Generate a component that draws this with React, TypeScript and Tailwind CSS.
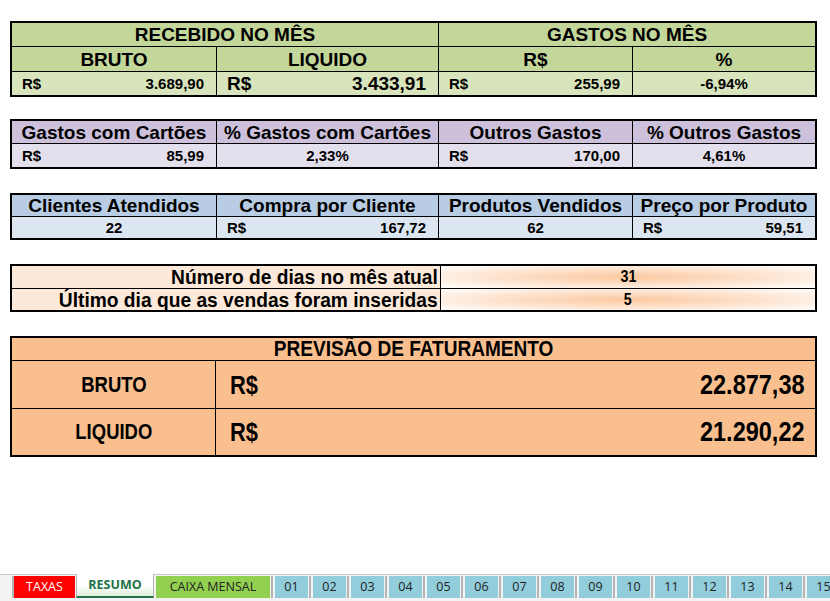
import type { ReactNode } from 'react'

// Spreadsheet "RESUMO" sheet: summary blocks + sheet tabs along the bottom.
// Grid lines come from a black table background showing through 1px gaps.
const TABLE = 'flex w-[807px] flex-col gap-px bg-black p-[2px] font-bold text-black leading-none'
const W = ['w-[204px]', 'w-[221px]', 'w-[193px]', 'w-[182px]']

function Row({ h, children }: { h: string; children: ReactNode }) {
  return <div className={`flex gap-px ${h}`}>{children}</div>
}

function Money({ value, big }: { value: string; big?: boolean }) {
  return (
    <div className={`flex h-full items-center justify-between pl-[10px] pr-[12px] ${big ? 'text-[19px]' : 'text-[15px]'}`}>
      <span>R$</span>
      <span>{value}</span>
    </div>
  )
}

function Center({ children }: { children: ReactNode }) {
  return <div className="flex h-full items-center justify-center text-[15px]">{children}</div>
}

// Arial Narrow look-alike: Liberation Sans squeezed horizontally
function Narrow({
  children,
  origin = 'origin-center',
  scale = 'scale-x-[0.84]',
}: {
  children: ReactNode
  origin?: string
  scale?: string
}) {
  return <span className={`inline-block whitespace-nowrap leading-[20px] ${scale} ${origin}`}>{children}</span>
}

function Recebido() {
  const head = 'flex shrink-0 items-center justify-center bg-[#c4d79b] text-[19px]'
  const val = 'shrink-0 bg-[#d8e4bc]'
  return (
    <div className={TABLE}>
      <Row h="h-[23px]">
        <div className={`w-[426px] ${head}`}>RECEBIDO NO MÊS</div>
        <div className={`w-[376px] ${head}`}>GASTOS NO MÊS</div>
      </Row>
      <Row h="h-[24px]">
        <div className={`${W[0]} ${head}`}>BRUTO</div>
        <div className={`${W[1]} ${head}`}>LIQUIDO</div>
        <div className={`${W[2]} ${head}`}>R$</div>
        <div className={`${W[3]} ${head}`}>%</div>
      </Row>
      <Row h="h-[23px]">
        <div className={`${W[0]} ${val}`}><Money value="3.689,90" /></div>
        <div className={`${W[1]} ${val}`}><Money value="3.433,91" big /></div>
        <div className={`${W[2]} ${val}`}><Money value="255,99" /></div>
        <div className={`${W[3]} ${val}`}><Center>-6,94%</Center></div>
      </Row>
    </div>
  )
}

function Block({
  headBg,
  valBg,
  heads,
  vals,
  headH,
  valH,
}: {
  headBg: string
  valBg: string
  heads: string[]
  vals: ReactNode[]
  headH: string
  valH: string
}) {
  return (
    <div className={TABLE}>
      <Row h={headH}>
        {heads.map((h, i) => (
          <div key={h} className={`${W[i]} ${headBg} flex shrink-0 items-center justify-center whitespace-nowrap text-[19px]`}>
            {h}
          </div>
        ))}
      </Row>
      <Row h={valH}>
        {vals.map((v, i) => (
          <div key={i} className={`${W[i]} ${valBg} shrink-0`}>
            {v}
          </div>
        ))}
      </Row>
    </div>
  )
}

function Dias() {
  const label = 'flex w-[428px] shrink-0 items-center justify-end bg-[#fde9d9] pr-[2px] text-[20px]'
  const val =
    'flex w-[374px] shrink-0 items-center justify-center bg-[radial-gradient(ellipse_at_center,#fbc9a0_0%,#fde0c9_45%,#ffffff_100%)] text-[17px]'
  return (
    <div className={TABLE}>
      <Row h="h-[22px]">
        <div className={label}>
          <Narrow origin="origin-right" scale="scale-x-[0.96]">Número de dias no mês atual</Narrow>
        </div>
        <div className={val}><Narrow>31</Narrow></div>
      </Row>
      <Row h="h-[21px]">
        <div className={label}>
          <Narrow origin="origin-right" scale="scale-x-[0.96]">Último dia que as vendas foram inseridas</Narrow>
        </div>
        <div className={val}><Narrow>5</Narrow></div>
      </Row>
    </div>
  )
}

function Previsao() {
  const rows: [string, string, string][] = [
    ['BRUTO', '22.877,38', 'h-[47px]'],
    ['LIQUIDO', '21.290,22', 'h-[46px]'],
  ]
  return (
    <div className={TABLE}>
      <div className="flex h-[22px] items-center justify-center bg-[#fabf8f] text-[22px]">
        <Narrow scale="scale-x-[0.865]">PREVISÃO DE FATURAMENTO</Narrow>
      </div>
      {rows.map(([k, v, h]) => (
        <Row key={k} h={h}>
          <div className="flex w-[203px] shrink-0 items-center justify-center bg-[#fabf8f] text-[22px]">
            <Narrow>{k}</Narrow>
          </div>
          <div className="flex w-[599px] shrink-0 items-center justify-between bg-[#fabf8f] pl-[14px] pr-[10px]">
            <span className="text-[26px]"><Narrow origin="origin-left">R$</Narrow></span>
            <span className="text-[28px]"><Narrow origin="origin-right">{v}</Narrow></span>
          </div>
        </Row>
      ))}
    </div>
  )
}

const MONTHS = ['01', '02', '03', '04', '05', '06', '07', '08', '09', '10', '11', '12', '13', '14', '15']

function Sep() {
  return <div className="ml-[1px] mr-[2px] w-[2px] bg-[#b4b4b4]" />
}

function Tabs() {
  return (
    <div className="flex h-[27px] items-start border-t border-[#c6c6c6] bg-[#f3f3f3] pl-[12px] pt-[1px] font-['Open_Sans','Noto_Sans',sans-serif] text-[12.5px]">
      <div className="flex h-[22px] items-stretch">
        <div className="w-[2px] bg-[#b4b4b4]" />
        <div className="flex w-[61px] items-center justify-center bg-[#ff0000] text-white">TAXAS</div>
        <div className="-mt-[2px] ml-[1px] flex h-[24px] w-[78px] items-center justify-center border-x border-[#b4b4b4] border-b-2 border-b-[#217346] bg-[linear-gradient(#ffffff,#ffffff_55%,#dfeeda)] font-bold text-[#217346]">
          RESUMO
        </div>
        <div className="ml-[2px] flex w-[114px] items-center justify-center bg-[#92d050] text-[#222]">CAIXA MENSAL</div>
        {MONTHS.map((m) => (
          <div key={m} className="flex items-stretch">
            <Sep />
            <div className="flex w-[33px] items-center justify-center bg-[#92cddc] text-[#222]">{m}</div>
          </div>
        ))}
      </div>
    </div>
  )
}

export default function App() {
  return (
    <div className="flex h-[601px] w-[830px] flex-col overflow-hidden bg-white font-['Liberation_Sans',Arial,sans-serif]">
      <div className="flex flex-1 flex-col items-start pl-[10px] pt-[21px]">
        <Recebido />
        <div className="mt-[22px]">
          <Block
            headBg="bg-[#ccc0da]"
            valBg="bg-[#e4dfec]"
            heads={['Gastos com Cartões', '% Gastos com Cartões', 'Outros Gastos', '% Outros Gastos']}
            vals={[
              <Money key="a" value="85,99" />,
              <Center key="b">2,33%</Center>,
              <Money key="c" value="170,00" />,
              <Center key="d">4,61%</Center>,
            ]}
            headH="h-[22px]"
            valH="h-[23px]"
          />
        </div>
        <div className="mt-[24px]">
          <Block
            headBg="bg-[#b8cce4]"
            valBg="bg-[#dce6f1]"
            heads={['Clientes Atendidos', 'Compra por Cliente', 'Produtos Vendidos', 'Preço por Produto']}
            vals={[
              <Center key="a">22</Center>,
              <Money key="b" value="167,72" />,
              <Center key="c">62</Center>,
              <Money key="d" value="59,51" />,
            ]}
            headH="h-[21px]"
            valH="h-[21px]"
          />
        </div>
        <div className="mt-[24px]">
          <Dias />
        </div>
        <div className="mt-[24px]">
          <Previsao />
        </div>
      </div>
      <Tabs />
    </div>
  )
}
